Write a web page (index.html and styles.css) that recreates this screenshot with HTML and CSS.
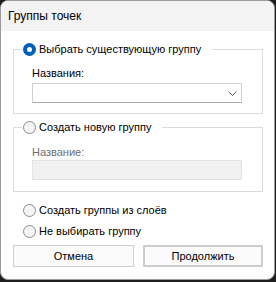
FILE: index.html
```html
<!DOCTYPE html>
<html>
<head>
    <meta charset="utf-8">
    <title>Группы точек</title>
    <link rel="stylesheet" href="styles.css">
</head>
<body>
    <div class="window">
        <div class="title">Группы точек</div>
        <div class="content">
            <fieldset class="group">
                <legend class="legend"><span class="radio checked"></span>Выбрать существующую группу</legend>
                <div class="label">Названия:</div>
                <div class="combo">
                    <svg class="chevron" width="9" height="5" viewBox="0 0 9 5"><path d="M0.5 0.5 L4.5 4.5 L8.5 0.5" fill="none" stroke="#5f5f5f" stroke-width="1"/></svg>
                </div>
            </fieldset>
            <fieldset class="group second">
                <legend class="legend"><span class="radio"></span>Создать новую группу</legend>
                <div class="label disabled">Название:</div>
                <div class="input"></div>
            </fieldset>
            <div class="options">
                <div class="option"><span class="radio"></span>Создать группы из слоёв</div>
                <div class="option"><span class="radio"></span>Не выбирать группу</div>
            </div>
            <div class="buttons">
                <div class="button">Отмена</div>
                <div class="button default">Продолжить</div>
            </div>
        </div>
    </div>
</body>
</html>
```

FILE: styles.css
```css
*{
    margin: 0;
    padding: 0;
    box-sizing: border-box;
}

body
{
    background: #1e1e1e;
    font-family: "Liberation Sans", Arial, sans-serif;
    font-size: 11px;
    color: #000;
}

.window
{
    width: 275px;
    height: 280px;
    background: #fff;
    border: 1px solid #9b9b9b;
    border-radius: 8px;
    overflow: hidden;
}

.title
{
    height: 30px;
    line-height: 30px;
    padding-left: 7px;
    background: #f3f3f3;
    font-size: 12px;
}

.content
{
    padding: 10px 11px 0 12px;
}

.group
{
    border: 1px solid #dcdcdc;
    padding: 0 18px 10px 18px;
    width: 250px;
}

.group.second
{
    margin-top: 5px;
    padding-bottom: 11px;
}

.legend
{
    display: flex;
    align-items: center;
    gap: 3px;
    height: 16px;
    line-height: 16px;
    margin-left: -10px;
    padding: 0 11px 0 1px;
}

.radio
{
    display: inline-block;
    width: 13px;
    height: 13px;
    border: 1px solid #8a8a8a;
    border-radius: 50%;
    background: #f5f5f5;
    flex: none;
}

.radio.checked
{
    border: 4px solid #005fb8;
    background: #fff;
}

.label
{
    margin-top: 8px;
    height: 16px;
    line-height: 16px;
}

.second .label
{
    margin-top: 9px;
}

.label.disabled
{
    color: #6d6d6d;
}

.combo
{
    margin-top: 2px;
    width: 210px;
    height: 20px;
    border: 1px solid #cfcfcf;
    border-bottom-color: #a8a8a8;
    background: #fff;
    display: flex;
    align-items: center;
    justify-content: flex-end;
    padding-right: 4px;
}

.input
{
    width: 210px;
    height: 20px;
    border: 1px solid #e3e3e3;
    background: #f0f0f0;
}

.options
{
    margin-top: 10px;
    display: flex;
    flex-direction: column;
    gap: 5px;
}

.option
{
    display: flex;
    align-items: center;
    gap: 3px;
    height: 16px;
    line-height: 16px;
    padding-left: 10px;
}

.buttons
{
    margin-top: 6px;
    display: grid;
    grid-template-columns: 121px 120px;
    gap: 9px;
}

.button
{
    height: 22px;
    line-height: 20px;
    text-align: center;
    border: 1px solid #d0d0d0;
    background: #fbfbfb;
}

.button.default
{
    border: 2px solid #cdcdcd;
    line-height: 18px;
}
```
